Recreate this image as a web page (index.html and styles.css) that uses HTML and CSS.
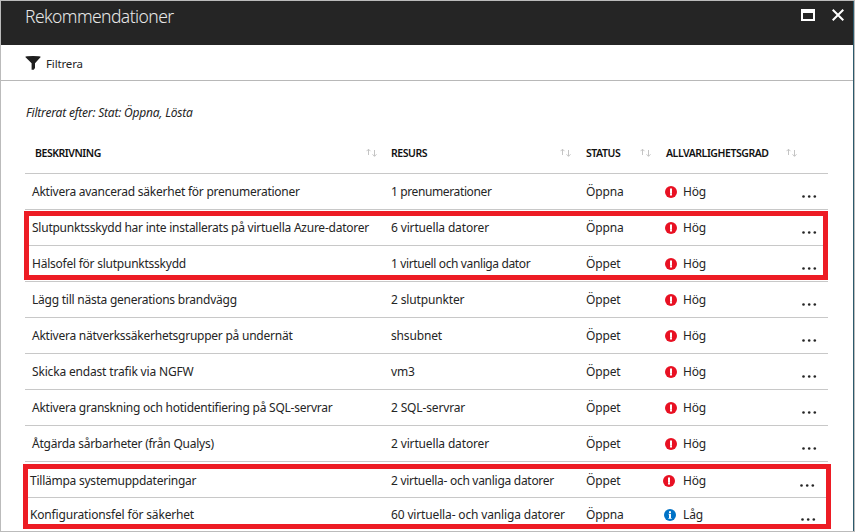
FILE: index.html
```
<!DOCTYPE html>
<html lang="sv">
<head>
<meta charset="utf-8">
<title>Rekommendationer</title>
<link rel="stylesheet" href="styles.css">
</head>
<body>
<svg class="defs" width="0" height="0">
  <symbol id="sort" viewBox="0 0 12 10"><path d="M2.5 7V1.2M.5 3.2l2-2 2 2M8.5 2v6.3M6.5 6.3l2 2 2-2" fill="none" stroke="#c4c4c4" stroke-width="1"/></symbol>
  <symbol id="high" viewBox="0 0 12 12"><circle cx="6" cy="6" r="6" fill="#e81123"/><path d="M5 2.6h2v6.8H5z" fill="#fff"/><path d="M5 7h2v1H5z" fill="#fbd0d4"/></symbol>
  <symbol id="low" viewBox="0 0 12 12"><circle cx="6" cy="6" r="6" fill="#0072c6"/><path d="M5 2.3h2V4H5zM4.5 4.8H7V9h.7v.8H4.4V9H5V5.6h-.5z" fill="#fff"/></symbol>
  <symbol id="dots" viewBox="0 0 15 3"><circle cx="1.5" cy="1.5" r="1.3"/><circle cx="7.2" cy="1.5" r="1.3"/><circle cx="12.8" cy="1.5" r="1.3"/></symbol>
</svg>
<div class="blade">
  <header class="titlebar">
    <h1>Rekommendationer</h1>
    <svg class="max" width="14" height="12" viewBox="0 0 14 12"><path d="M0 0h14v12H0zM2 4v6h10V4z" fill="#fff" fill-rule="evenodd"/></svg>
    <svg class="close" width="12" height="12" viewBox="0 0 12 12"><path d="M.7.7l10.6 10.6M11.3.7L.7 11.3" stroke="#fff" stroke-width="2"/></svg>
  </header>
  <div class="toolbar">
    <svg width="16" height="14" viewBox="0 0 16 14"><path d="M.3 1Q.3 0 8 0t7.7 1L10 7.3V12l-1.3 1.8H6.6V7.3z" fill="#1e1e1e"/></svg>
    <span>Filtrera</span>
  </div>
  <p class="filter">Filtrerat efter: Stat: Öppna, Lösta</p>
  <main class="table">
    <div class="row head">
      <div><span>BESKRIVNING</span><svg class="sort"><use href="#sort"/></svg></div>
      <div><span>RESURS</span><svg class="sort"><use href="#sort"/></svg></div>
      <div><span>STATUS</span><svg class="sort"><use href="#sort"/></svg></div>
      <div><span>ALLVARLIGHETSGRAD</span><svg class="sort"><use href="#sort"/></svg></div>
    </div>
    <div class="row"><div>Aktivera avancerad säkerhet för prenumerationer</div><div class="tight">1 prenumerationer</div><div>Öppna</div><div><svg class="sev"><use href="#high"/></svg>Hög<svg class="dots"><use href="#dots"/></svg></div></div>
    <div class="row"><div>Slutpunktsskydd har inte installerats på virtuella Azure-datorer</div><div>6 virtuella datorer</div><div>Öppna</div><div><svg class="sev"><use href="#high"/></svg>Hög<svg class="dots"><use href="#dots"/></svg></div></div>
    <div class="row"><div>Hälsofel för slutpunktsskydd</div><div class="tight">1 virtuell och vanliga dator</div><div>Öppet</div><div><svg class="sev"><use href="#high"/></svg>Hög<svg class="dots"><use href="#dots"/></svg></div></div>
    <div class="row"><div>Lägg till nästa generations brandvägg</div><div>2 slutpunkter</div><div>Öppet</div><div><svg class="sev"><use href="#high"/></svg>Hög<svg class="dots"><use href="#dots"/></svg></div></div>
    <div class="row"><div>Aktivera nätverkssäkerhetsgrupper på undernät</div><div>shsubnet</div><div>Öppet</div><div><svg class="sev"><use href="#high"/></svg>Hög<svg class="dots"><use href="#dots"/></svg></div></div>
    <div class="row"><div class="loose">Skicka endast trafik via NGFW</div><div>vm3</div><div>Öppet</div><div><svg class="sev"><use href="#high"/></svg>Hög<svg class="dots"><use href="#dots"/></svg></div></div>
    <div class="row"><div>Aktivera granskning och hotidentifiering på SQL-servrar</div><div>2 SQL-servrar</div><div>Öppet</div><div><svg class="sev"><use href="#high"/></svg>Hög<svg class="dots"><use href="#dots"/></svg></div></div>
    <div class="row"><div>Åtgärda sårbarheter (från Qualys)</div><div>2 virtuella datorer</div><div>Öppet</div><div><svg class="sev"><use href="#high"/></svg>Hög<svg class="dots"><use href="#dots"/></svg></div></div>
    <div class="row updates"><div>Tillämpa systemuppdateringar</div><div class="snug">2 virtuella- och vanliga datorer</div><div>Öppet</div><div><svg class="sev"><use href="#high"/></svg>Hög<svg class="dots"><use href="#dots"/></svg></div></div>
    <div class="row config"><div class="loose">Konfigurationsfel för säkerhet</div><div>60 virtuella- och vanliga datorer</div><div>Öppna</div><div><svg class="sev"><use href="#low"/></svg>Låg<svg class="dots"><use href="#dots"/></svg></div></div>
    <div class="mark mark-endpoint"></div>
    <div class="mark mark-updates"></div>
  </main>
</div>
</body>
</html>
```
FILE: styles.css
```
* { box-sizing: border-box; }
body { margin: 0; background: #fff; color: #252525; font: 12px/16px "Noto Sans", "Open Sans", sans-serif; }
.defs { position: absolute; }
.blade { width: 855px; height: 532px; border: 1px solid #bbb; overflow: hidden; box-shadow: inset -1px 0 #2c5a6c; }
.titlebar { display: flex; height: 44px; margin-right: 1px; padding: 8px 8px 0 24px; background: #252525; }
h1 { flex: 1; margin: -4px 0 0; color: #e8e8e8; font: 300 17.5px/23px "Noto Sans", "Open Sans", sans-serif; letter-spacing: -.57px; }
.max { margin-right: 17px; }
.close { margin: 0 1px 0 0; }
.toolbar { display: flex; align-items: center; gap: 5px; height: 36px; margin-right: 1px; padding-left: 24px; border-bottom: 1px solid #b8b8b8; font-size: 11.5px; letter-spacing: -.15px; }
.toolbar span { padding-top: 2px; }
.filter { margin: 24px 0 0 25px; font-style: italic; font-size: 12px; letter-spacing: -.2px; }
.table { position: relative; width: 803px; margin: 12px 0 0 24px; }
.row { display: grid; grid-template-columns: 366px 195px 79px 163px; height: 36px; border-bottom: 1px solid #c8c8c8; letter-spacing: -.15px; white-space: nowrap; }
.row > div { display: flex; align-items: center; }
.row > div:first-child { padding-left: 7px; letter-spacing: -.24px; }
.row > .loose:first-child { letter-spacing: -.17px; }
.row > .tight { letter-spacing: -.38px; }
.row > .snug { letter-spacing: -.28px; }
.head { height: 41px; color: #111; font-size: 10.5px; font-weight: 600; letter-spacing: -.45px; }
.row.head > div:first-child { padding-left: 10px; letter-spacing: -.45px; }
.sort { width: 12px; height: 10px; margin: -1px 13px 0 auto; }
.head > div:nth-child(2) .sort { margin-right: 14px; }
.head > div:last-child { padding-left: 1px; }
.head > div:last-child .sort { margin-right: 30px; }
.sev { width: 12px; height: 12px; margin-right: 6px; }
.dots { width: 15px; height: 3px; margin: 9px 11px 0 auto; fill: #252525; }
.updates > div { padding-top: 2px; }
.row.updates > div:first-child, .row.config > div:first-child { padding-left: 5px; }
.updates .sev { margin: 0 8px 0 -2px; }
.updates .dots { margin-right: 13px; }
.config { height: 34px; border-bottom: 0; }
.config .sev { margin: 0 7px 0 -1px; }
.config .dots { margin-right: 12px; }
.mark { position: absolute; border: 5px solid #ed1c24; }
.mark-endpoint { left: -1px; top: 78px; width: 804px; height: 69px; }
.mark-updates { left: -2px; top: 331px; width: 808px; height: 65px; }
```
